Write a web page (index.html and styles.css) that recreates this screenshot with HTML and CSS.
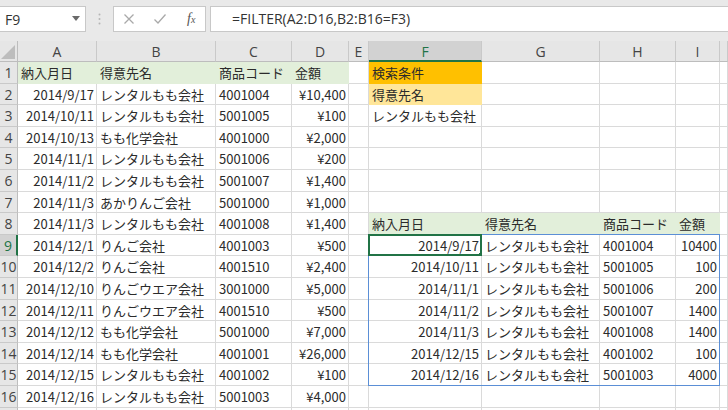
FILE: index.html
```html
<!DOCTYPE html>
<html lang="ja">
<head>
<meta charset="utf-8">
<link rel="stylesheet" href="styles.css">
</head>
<body>
<div class="toolbar">
  <div class="namebox"><span>F9</span><svg class="dd" width="8" height="5" viewBox="0 0 8 5"><path d="M0 0H8L4 5Z" fill="#6a6a6a"/></svg></div>
  <div class="sep"><svg width="3" height="12" viewBox="0 0 3 12"><circle cx="1.5" cy="1.5" r="1" fill="#b5b5b5"/><circle cx="1.5" cy="6" r="1" fill="#b5b5b5"/><circle cx="1.5" cy="10.5" r="1" fill="#b5b5b5"/></svg></div>
  <div class="btns">
    <svg class="ico" width="12" height="12" viewBox="0 0 12 12"><path d="M1.5 1.5L10.5 10.5M10.5 1.5L1.5 10.5" stroke="#a9a9a9" stroke-width="1.3" fill="none"/></svg>
    <svg class="ico" width="14" height="12" viewBox="0 0 14 12"><path d="M1.5 6.5L5 10L12.5 1.5" stroke="#a9a9a9" stroke-width="1.3" fill="none"/></svg>
    <span class="fx">f<span class="x">x</span></span>
  </div>
  <div class="fbar">=FILTER(A2:D16,B2:B16=F3)</div>
</div>
<div class="sheet">
  <div class="corner"><svg width="14" height="14" viewBox="0 0 14 14"><path d="M14 0V14H0Z" fill="#bdbdbd"/></svg></div>
  <div class="ch">A</div><div class="ch">B</div><div class="ch">C</div><div class="ch">D</div><div class="ch">E</div><div class="ch sel">F</div><div class="ch">G</div><div class="ch">H</div><div class="ch">I</div><div class="ch"></div>

  <div class="rh">1</div><div class="c g">納入月日</div><div class="c g">得意先名</div><div class="c g">商品コード</div><div class="c g">金額</div><div class="c"></div><div class="c o">検索条件</div><div class="c"></div><div class="c"></div><div class="c"></div><div class="c"></div>
  <div class="rh">2</div><div class="c r">2014/9/17</div><div class="c">レンタルもも会社</div><div class="c">4001004</div><div class="c r">¥10,400</div><div class="c"></div><div class="c y">得意先名</div><div class="c"></div><div class="c"></div><div class="c"></div><div class="c"></div>
  <div class="rh">3</div><div class="c r">2014/10/11</div><div class="c">レンタルもも会社</div><div class="c">5001005</div><div class="c r">¥100</div><div class="c"></div><div class="c">レンタルもも会社</div><div class="c"></div><div class="c"></div><div class="c"></div><div class="c"></div>
  <div class="rh">4</div><div class="c r">2014/10/13</div><div class="c">もも化学会社</div><div class="c">4001000</div><div class="c r">¥2,000</div><div class="c"></div><div class="c"></div><div class="c"></div><div class="c"></div><div class="c"></div><div class="c"></div>
  <div class="rh">5</div><div class="c r">2014/11/1</div><div class="c">レンタルもも会社</div><div class="c">5001006</div><div class="c r">¥200</div><div class="c"></div><div class="c"></div><div class="c"></div><div class="c"></div><div class="c"></div><div class="c"></div>
  <div class="rh">6</div><div class="c r">2014/11/2</div><div class="c">レンタルもも会社</div><div class="c">5001007</div><div class="c r">¥1,400</div><div class="c"></div><div class="c"></div><div class="c"></div><div class="c"></div><div class="c"></div><div class="c"></div>
  <div class="rh">7</div><div class="c r">2014/11/3</div><div class="c">あかりんご会社</div><div class="c">5001000</div><div class="c r">¥1,000</div><div class="c"></div><div class="c"></div><div class="c"></div><div class="c"></div><div class="c"></div><div class="c"></div>
  <div class="rh">8</div><div class="c r">2014/11/3</div><div class="c">レンタルもも会社</div><div class="c">4001008</div><div class="c r">¥1,400</div><div class="c"></div><div class="c g">納入月日</div><div class="c g">得意先名</div><div class="c g">商品コード</div><div class="c g">金額</div><div class="c"></div>
  <div class="rh sel">9</div><div class="c r">2014/12/1</div><div class="c">りんご会社</div><div class="c">4001003</div><div class="c r">¥500</div><div class="c"></div><div class="c r">2014/9/17</div><div class="c">レンタルもも会社</div><div class="c">4001004</div><div class="c r">10400</div><div class="c"></div>
  <div class="rh">10</div><div class="c r">2014/12/2</div><div class="c">りんご会社</div><div class="c">4001510</div><div class="c r">¥2,400</div><div class="c"></div><div class="c r">2014/10/11</div><div class="c">レンタルもも会社</div><div class="c">5001005</div><div class="c r">100</div><div class="c"></div>
  <div class="rh">11</div><div class="c r">2014/12/10</div><div class="c">りんごウエア会社</div><div class="c">3001000</div><div class="c r">¥5,000</div><div class="c"></div><div class="c r">2014/11/1</div><div class="c">レンタルもも会社</div><div class="c">5001006</div><div class="c r">200</div><div class="c"></div>
  <div class="rh">12</div><div class="c r">2014/12/11</div><div class="c">りんごウエア会社</div><div class="c">4001510</div><div class="c r">¥500</div><div class="c"></div><div class="c r">2014/11/2</div><div class="c">レンタルもも会社</div><div class="c">5001007</div><div class="c r">1400</div><div class="c"></div>
  <div class="rh">13</div><div class="c r">2014/12/12</div><div class="c">もも化学会社</div><div class="c">5001000</div><div class="c r">¥7,000</div><div class="c"></div><div class="c r">2014/11/3</div><div class="c">レンタルもも会社</div><div class="c">4001008</div><div class="c r">1400</div><div class="c"></div>
  <div class="rh">14</div><div class="c r">2014/12/14</div><div class="c">もも化学会社</div><div class="c">4001001</div><div class="c r">¥26,000</div><div class="c"></div><div class="c r">2014/12/15</div><div class="c">レンタルもも会社</div><div class="c">4001002</div><div class="c r">100</div><div class="c"></div>
  <div class="rh">15</div><div class="c r">2014/12/15</div><div class="c">レンタルもも会社</div><div class="c">4001002</div><div class="c r">¥100</div><div class="c"></div><div class="c r">2014/12/16</div><div class="c">レンタルもも会社</div><div class="c">5001003</div><div class="c r">4000</div><div class="c"></div>
  <div class="rh">16</div><div class="c r">2014/12/16</div><div class="c">レンタルもも会社</div><div class="c">5001003</div><div class="c r">¥4,000</div><div class="c"></div><div class="c"></div><div class="c"></div><div class="c"></div><div class="c"></div><div class="c"></div>
  <div class="rh"></div><div class="c"></div><div class="c"></div><div class="c"></div><div class="c"></div><div class="c"></div><div class="c"></div><div class="c"></div><div class="c"></div><div class="c"></div><div class="c"></div>

  <div class="spill"></div>
  <div class="active"><span class="handle"></span></div>
</div>
</body>
</html>
```
FILE: styles.css
```css
html, body {
  margin: 0;
  padding: 0;
}
body {
  width: 728px;
  height: 410px;
  overflow: hidden;
  background: #ffffff;
  color: #2b2b2b;
  font-family: "Noto Sans CJK JP", sans-serif;
}
.toolbar {
  display: flex;
  align-items: flex-start;
  height: 41px;
  box-sizing: border-box;
  padding-top: 6px;
  background: #e9e9e9;
}
.namebox {
  width: 86px;
  height: 26px;
  box-sizing: border-box;
  background: #fff;
  border: 1px solid #c8c8c8;
  border-left: none;
  display: flex;
  align-items: center;
  justify-content: space-between;
  padding: 0 5px 0 5px;
  font-family: "Open Sans", sans-serif;
  font-size: 14px;
  color: #333;
}
.dd {
  margin-top: -2px;
}
.sep {
  width: 27px;
  height: 26px;
  display: flex;
  align-items: center;
  justify-content: center;
}
.btns {
  width: 93px;
  height: 26px;
  box-sizing: border-box;
  background: #fff;
  border: 1px solid #c8c8c8;
  display: flex;
  align-items: center;
  padding-left: 9px;
  gap: 18px;
}
.fx {
  font-family: "Liberation Serif", serif;
  font-style: italic;
  font-size: 14px;
  color: #555;
  margin-left: 2px;
}
.fx .x {
  font-size: 10px;
}
.fbar {
  flex: 1;
  margin-left: 4px;
  height: 26px;
  box-sizing: border-box;
  background: #fff;
  border: 1px solid #c8c8c8;
  border-right: none;
  padding-left: 21px;
  line-height: 24px;
  font-family: "Open Sans", sans-serif;
  font-size: 14px;
  color: #333;
}
.sheet {
  position: relative;
  display: grid;
  grid-template-columns: 18px 79px 119px 76px 57px 20px 113px 118px 76px 44px 8px;
  grid-template-rows: 21px repeat(17, 21.6px);
  font-size: 13px;
}
.sheet > div {
  box-sizing: border-box;
  overflow: hidden;
  white-space: nowrap;
}
.corner {
  background: #e6e6e6;
  border-right: 1px solid #bdbdbd;
  border-bottom: 1px solid #bdbdbd;
  display: flex;
  align-items: flex-end;
  justify-content: flex-end;
  padding: 0 2px 2px 0;
}
.ch {
  background: #e6e6e6;
  border-right: 1px solid #c9c9c9;
  border-bottom: 1px solid #bdbdbd;
  text-align: center;
  line-height: 21px;
  font-family: "Open Sans", sans-serif;
  font-size: 14px;
  color: #444;
}
.ch.sel {
  background: #d2d2d2;
  border-bottom: 2px solid #217346;
  color: #217346;
}
.rh {
  background: #e6e6e6;
  border-right: 1px solid #bdbdbd;
  border-bottom: 1px solid #c9c9c9;
  text-align: center;
  line-height: 21px;
  font-family: "Open Sans", sans-serif;
  font-size: 14px;
  color: #444;
}
.rh.sel {
  background: #d2d2d2;
  border-right: 2px solid #217346;
  color: #217346;
}
.c {
  border-right: 1px solid #dadada;
  border-bottom: 1px solid #dadada;
  line-height: 21px;
  padding: 0 2px 0 3px;
}
.c.r {
  text-align: right;
}
.c.g {
  background: #e2efda;
  border-color: #e2efda;
}
.c.o {
  background: #ffc000;
  border-color: #ffc000;
}
.c.y {
  background: #ffe699;
  border-color: #ffe699;
}
.spill {
  position: absolute;
  grid-column: 7 / 11;
  grid-row: 10 / 17;
  top: -1px;
  left: -1px;
  right: 0;
  bottom: 0;
  border: 1px solid #5b8fd6;
  pointer-events: none;
}
.active {
  position: absolute;
  grid-column: 7 / 8;
  grid-row: 10 / 11;
  top: -1px;
  left: -1px;
  right: 0;
  bottom: 0;
  border: 2px solid #217346;
  pointer-events: none;
}
.handle {
  position: absolute;
  right: -5px;
  bottom: -5px;
  width: 5px;
  height: 5px;
  background: #217346;
  border: 1px solid #fff;
}
```
